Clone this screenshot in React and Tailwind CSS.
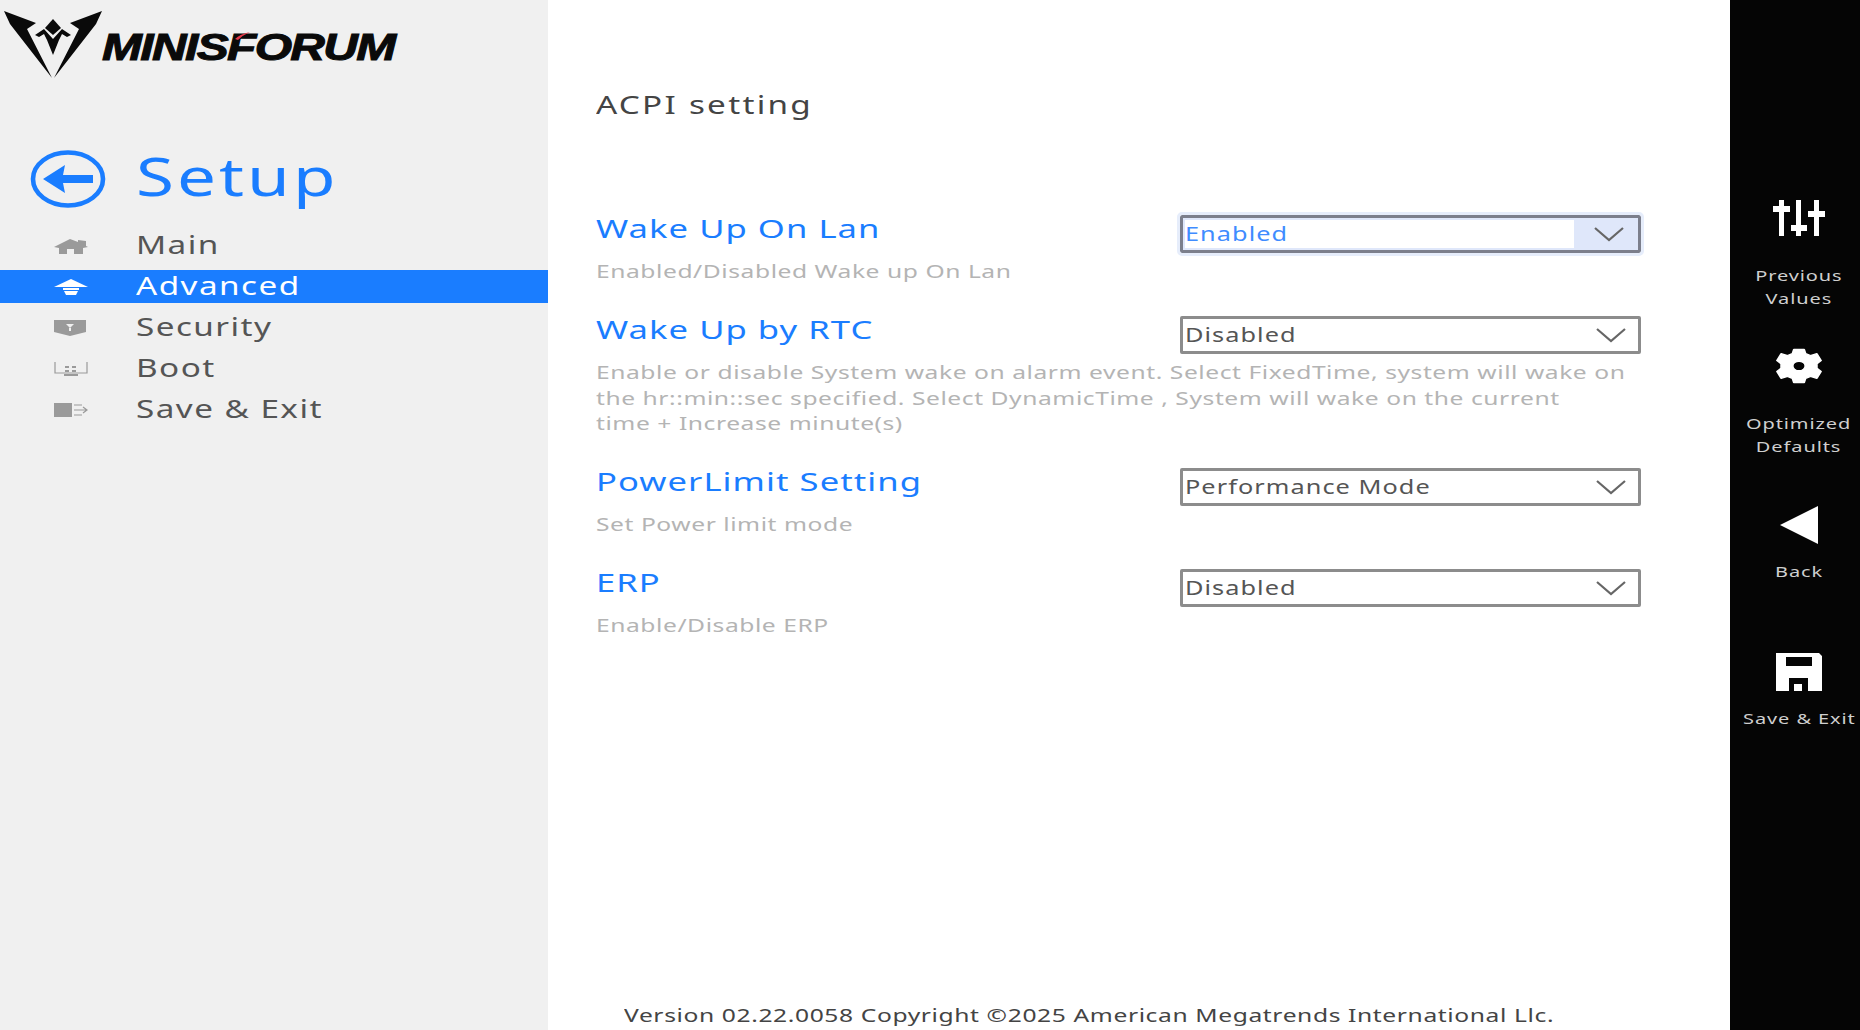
import React from 'react';

const navItems = [
    { label: 'Main', icon: 'main' },
    { label: 'Advanced', icon: 'advanced', active: true },
    { label: 'Security', icon: 'security' },
    { label: 'Boot', icon: 'boot' },
    { label: 'Save & Exit', icon: 'save' }
];

const settings = [
    {
        title: 'Wake Up On Lan',
        value: 'Enabled',
        focused: true,
        rowClass: 'h-[101px]',
        help: ['Enabled/Disabled Wake up On Lan']
    },
    {
        title: 'Wake Up by RTC',
        value: 'Disabled',
        rowClass: 'h-[152px]',
        help: [
            'Enable or disable System wake on alarm event. Select FixedTime, system will wake on',
            'the hr::min::sec specified. Select DynamicTime , System will wake on the current',
            'time + Increase minute(s)'
        ]
    },
    {
        title: 'PowerLimit Setting',
        value: 'Performance Mode',
        rowClass: 'h-[101px]',
        help: ['Set Power limit mode']
    },
    {
        title: 'ERP',
        value: 'Disabled',
        rowClass: 'h-[101px]',
        help: ['Enable/Disable ERP']
    }
];

// the firmware screen is stretched sideways, so its text is too
function Wide({ children }) {
    return <span className="inline-block origin-left scale-x-[1.33] whitespace-nowrap">{children}</span>;
}

function Logo() {
    return (
        <div className="flex items-start h-[80px]">
            <svg width="104" height="72" viewBox="0 0 104 72" className="shrink-0">
                <path d="M4 1 L36 13 L27 19 L52 68 L10 14 Z M102 1 L70 13 L79 19 L54 68 L96 14 Z" fill="#0a0a0a" />
                <path d="M53 9 L61 18 L53 25 L45 18 Z" fill="#0a0a0a" />
                <path d="M35 25 L44 19 L53 29 L62 19 L71 25 L67 27 L62 24 L59 30 L53 45 L47 30 L44 24 L39 27 Z" fill="#0a0a0a" />
            </svg>
            <div className="relative mt-[18px] -ml-[2px] font-['Liberation_Sans',sans-serif] font-bold italic text-[36px] leading-[40px] tracking-[-1.2px] text-[#0a0a0a] [-webkit-text-stroke:1px_#0a0a0a]">
                <Wide>MINISFORUM</Wide>
                <svg width="16" height="8" viewBox="0 0 16 8" className="absolute left-[133px] top-[4px]">
                    <path d="M0 7 Q5 2 15 0 Q8 3 3 8 Z" fill="#e8394a" />
                </svg>
            </div>
        </div>
    );
}

function NavIcon({ name, active }) {
    const c = active ? '#ffffff' : '#9a9a9a';
    if (name === 'main') {
        return (
            <svg width="34" height="16" viewBox="0 0 34 16">
                <path d="M0 9 L16 1 L24 4 L24 2 L32 3 L32 8 L34 9 L29 10 L29 16 L20 16 L20 11 L13 11 L13 16 L5 16 L5 10 Z" fill={c} />
            </svg>
        );
    }
    if (name === 'advanced') {
        return (
            <svg width="34" height="16" viewBox="0 0 34 16">
                <path d="M0 8 L17 0 L34 8 Z" fill={c} />
                <path d="M9 9 H25 V11 H9 Z M10 12 H24 L22 16 H12 Z" fill={c} />
            </svg>
        );
    }
    if (name === 'security') {
        return (
            <svg width="32" height="16" viewBox="0 0 32 16">
                <path d="M0 0 H32 V12 L16 16 L0 12 Z" fill={c} />
                <path d="M12 4 H20 L16 8 Z M15 8 H17 V11 H15 Z" fill="#f0f0f0" />
            </svg>
        );
    }
    if (name === 'boot') {
        return (
            <svg width="34" height="16" viewBox="0 0 34 16">
                <path d="M1 1 V12 H33 V1" fill="none" stroke={c} strokeWidth="1.2" />
                <path d="M11 5 H15 V7 H11 Z M18 5 H22 V7 H18 Z M11 9 H15 V11 H11 Z M18 9 H22 V11 H18 Z M10 13 H24 V15 H10 Z" fill={c} />
            </svg>
        );
    }
    return (
        <svg width="34" height="16" viewBox="0 0 34 16">
            <path d="M0 1 H18 V15 H0 Z" fill={c} />
            <path d="M20 3 H28 M20 13 H28 M20 8 H32 M29 5 L33 8 L29 11" fill="none" stroke={c} strokeWidth="1.2" />
        </svg>
    );
}

function Sidebar() {
    return (
        <aside className="w-[548px] shrink-0 bg-[#f0f0f0] flex flex-col pt-[10px]">
            <Logo />
            <div className="flex items-center gap-[30px] mt-[56px] pl-[30px] h-[60px]">
                <svg width="76" height="58" viewBox="0 0 76 58" className="mt-[5px]">
                    <ellipse cx="38" cy="29" rx="35" ry="26.5" fill="none" stroke="#1a7dff" strokeWidth="4.6" />
                    <path d="M13 29 L35 15 L33 25 L63 25 L63 33 L33 33 L35 43 Z" fill="#1a7dff" />
                </svg>
                <span className="text-[52px] leading-[60px] tracking-[2.3px] text-[#1a7dff]"><Wide>Setup</Wide></span>
            </div>
            <nav className="flex flex-col gap-[8px] mt-[23px]">
                {navItems.map((item) => (
                    <div
                        key={item.label}
                        className={`h-[33px] flex items-center ${item.active ? 'bg-[#1a7dff] text-white' : 'text-[#555555]'}`}
                    >
                        <span className="w-[136px] pl-[54px] flex items-center">
                            <NavIcon name={item.icon} active={item.active} />
                        </span>
                        <span className="text-[25px] leading-[33px] tracking-[1.1px] -mt-[3px]"><Wide>{item.label}</Wide></span>
                    </div>
                ))}
            </nav>
        </aside>
    );
}

function SelectBox({ value, focused }) {
    return (
        <div className={`h-[38px] mt-[4px] rounded-[2px] border-[3px] flex ${focused ? 'border-[#7c7f8c] bg-[#dfe7fa] p-[2px] outline-[3px] outline-[#e6edfb]' : 'border-[#8c8c8c] bg-white'}`}>
            <span className={`flex-1 flex items-center text-[19px] tracking-[0.8px] ${focused ? 'bg-white text-[#3f8cff]' : 'pl-[2px] text-[#555555]'}`}>
                <Wide>{value}</Wide>
            </span>
            <span className="w-[62px] pl-[8px] flex items-center justify-center">
                <svg width="32" height="16" viewBox="0 0 32 16">
                    <path d="M2 2 L16 14 L30 2" fill="none" stroke="#666666" strokeWidth="2.2" />
                </svg>
            </span>
        </div>
    );
}

function SettingRow({ setting }) {
    return (
        <div className={`grid grid-cols-[584px_461px] items-start ${setting.rowClass}`}>
            <div>
                <div className="text-[26px] leading-[38px] tracking-[0.8px] -mt-[2px] text-[#1a7dff]"><Wide>{setting.title}</Wide></div>
                <div className="mt-[11px] text-[18.5px] leading-[25.5px] tracking-[0.42px] text-[#b4b4b4]">
                    {setting.help.map((line) => (
                        <div key={line}><Wide>{line}</Wide></div>
                    ))}
                </div>
            </div>
            <SelectBox value={setting.value} focused={setting.focused} />
        </div>
    );
}

function ActionButton({ icon, lines, className, labelClass }) {
    return (
        <div className={`flex flex-col items-center ${className}`}>
            <div className="h-[44px] flex items-center justify-center">{icon}</div>
            <div className={`text-[15px] leading-[23px] tracking-[0.7px] text-[#cfcfcf] text-center whitespace-nowrap ${labelClass}`}>
                {lines.map((line) => (
                    <div key={line} className="scale-x-[1.33]">{line}</div>
                ))}
            </div>
        </div>
    );
}

function ActionBar() {
    return (
        <aside className="w-[130px] shrink-0 bg-[#050505] flex flex-col items-center pl-[8px] pt-[196px]">
            <ActionButton
                labelClass="mt-[24px]"
                lines={['Previous', 'Values']}
                icon={
                    <svg width="52" height="36" viewBox="0 0 52 36">
                        <path d="M6 0 H11 V36 H6 Z M23 0 H28 V36 H23 Z M41 0 H46 V36 H41 Z" fill="#ffffff" />
                        <path d="M0 6 H17 V12 H0 Z M18 25 H34 V31 H18 Z M35 11 H52 V17 H35 Z" fill="#ffffff" />
                    </svg>
                }
            />
            <ActionButton
                className="mt-[34px]"
                labelClass="mt-[24px]"
                lines={['Optimized', 'Defaults']}
                icon={
                    <svg width="50" height="38" viewBox="0 0 24 24" preserveAspectRatio="none">
                        <path fillRule="evenodd" stroke="#ffffff" strokeWidth="0.8" strokeLinejoin="round" d="M9.5 1.5 H14.5 L15.2 4.2 L17.5 5.4 L20.6 4.2 L22.6 8.6 L20.6 10.6 V13.4 L22.6 15.4 L20.6 19.8 L17.5 18.6 L15.2 19.8 L14.5 22.5 H9.5 L8.8 19.8 L6.5 18.6 L3.4 19.8 L1.4 15.4 L3.4 13.4 V10.6 L1.4 8.6 L3.4 4.2 L6.5 5.4 L8.8 4.2 Z M12 9 A3 3 0 1 0 12 15 A3 3 0 1 0 12 9 Z" fill="#ffffff" />
                    </svg>
                }
            />
            <ActionButton
                className="mt-[45px]"
                labelClass="mt-[13px]"
                lines={['Back']}
                icon={
                    <svg width="38" height="38" viewBox="0 0 38 38">
                        <path d="M0 19 L38 0 V38 Z" fill="#ffffff" />
                    </svg>
                }
            />
            <ActionButton
                className="mt-[67px]"
                labelClass="mt-[13px]"
                lines={['Save & Exit']}
                icon={
                    <svg width="46" height="38" viewBox="0 0 46 38">
                        <path fillRule="evenodd" d="M0 0 H43 L46 3 V38 H32 V25 H13 V38 H0 Z M10 4 V13 H36 V4 Z M18 31 H26 V38 H18 Z" fill="#ffffff" />
                    </svg>
                }
            />
        </aside>
    );
}

export default function App() {
    return (
        <div className="w-[1860px] h-[1030px] flex overflow-hidden bg-white font-['Noto_Sans',sans-serif]">
            <Sidebar />
            <main className="flex-1 min-w-0 flex flex-col pl-[48px] pt-[85px]">
                <h1 className="text-[25px] leading-[38px] tracking-[1.7px] text-[#444444]"><Wide>ACPI setting</Wide></h1>
                <div className="mt-[88px] flex flex-col">
                    {settings.map((setting) => (
                        <SettingRow key={setting.title} setting={setting} />
                    ))}
                </div>
                <div className="mt-auto pl-[28px] h-[28px] text-[18.5px] leading-[26px] tracking-[0.46px] text-[#444444]">
                    <Wide>Version 02.22.0058 Copyright ©2025 American Megatrends International Llc.</Wide>
                </div>
            </main>
            <ActionBar />
        </div>
    );
}
